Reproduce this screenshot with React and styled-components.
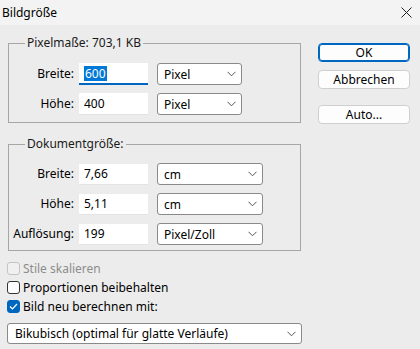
import React from "react";
import styled, { createGlobalStyle } from "styled-components";

const Global = createGlobalStyle`
  html, body { margin: 0; padding: 0; background: #ececec; }
  body { font-family: "Noto Sans", "Open Sans", sans-serif; font-size: 12px; color: #000; }
  * { box-sizing: border-box; }
`;

const Window = styled.div`
  width: 420px;
  height: 349px;
  background: #ececec;
  display: flex;
  flex-direction: column;
  overflow: hidden;
`;

const TitleBar = styled.div`
  height: 25px;
  background: #f3f3f3;
  display: flex;
  align-items: center;
  justify-content: space-between;
  padding: 0 8px 0 2px;
`;

const Title = styled.span`
  font-size: 12px;
  line-height: 16px;
`;

const Body = styled.div`
  display: flex;
  padding: 10px 0 0 7px;
`;

const LeftCol = styled.div`
  width: 296px;
  display: flex;
  flex-direction: column;
`;

const Group = styled.fieldset`
  margin: ${(p) => (p.$first ? "0" : "13px")} 0 0 1px;
  width: 293px;
  min-width: 0;
  border: 1px solid #a6a6a6;
  padding: ${(p) => p.$pt}px 0 ${(p) => p.$pb}px 0;
  display: grid;
  grid-template-columns: 65px 74px ${(p) => p.$dd + 9}px;
  row-gap: 8px;
  align-items: center;
`;

const Legend = styled.legend`
  margin-left: 16px;
  padding: 0 2px;
  line-height: 16px;
  color: #1a1a1a;
`;

const Label = styled.label`
  text-align: right;
  line-height: 22px;
`;

const Input = styled.div`
  margin-left: 5px;
  width: 69px;
  height: ${(p) => (p.$h ? p.$h : 21)}px;
  background: #fff;
  border-bottom: ${(p) => (p.$focus ? "2px solid #0067c0" : "1px solid #e3e3e3")};
  padding-left: 5px;
  display: flex;
  align-items: center;
`;

const Selected = styled.span`
  background: #0078d7;
  color: #fff;
  padding: 0 1px;
  line-height: 15px;
`;

const Select = styled.div`
  margin-left: 9px;
  width: ${(p) => p.$w}px;
  height: 22px;
  background: #fff;
  border: 1px solid #8a8a8a;
  border-radius: 3px;
  display: flex;
  align-items: center;
  justify-content: space-between;
  padding: 0 5px 0 6px;
`;

const Chevron = () => (
  <svg width="9" height="6" viewBox="0 0 9 6">
    <path d="M0.5 0.8 L4.5 4.8 L8.5 0.8" fill="none" stroke="#555" strokeWidth="1" />
  </svg>
);

const CheckRow = styled.div`
  height: 19px;
  display: flex;
  align-items: center;
  gap: 3px;
  color: ${(p) => (p.$disabled ? "#8c8c8c" : "#000")};
  margin-top: ${(p) => (p.$first ? "8px" : "0")};
`;

const Box = styled.span`
  width: 13px;
  height: 13px;
  border-radius: 3px;
  border: 1px solid ${(p) => (p.$disabled ? "#c4c4c4" : p.$checked ? "#0067c0" : "#333")};
  background: ${(p) => (p.$checked ? "#0067c0" : p.$disabled ? "#f0f0f0" : "#fdfdfd")};
  display: flex;
  align-items: center;
  justify-content: center;
`;

const WideSelect = styled(Select)`
  margin: 7px 0 0 0;
  width: 295px;
  height: 21px;
  padding-left: 7px;
`;

const RightCol = styled.div`
  margin-left: 15px;
  padding-top: 8px;
  display: flex;
  flex-direction: column;
  gap: 8px;
`;

const Button = styled.button`
  width: 92px;
  height: 19px;
  margin-top: ${(p) => (p.$gap ? "8px" : "0")};
  font: inherit;
  font-size: 12px;
  line-height: 16px;
  color: #000;
  background: #fdfdfd;
  border: 1px solid ${(p) => (p.$default ? "#0067c0" : "#cfcfcf")};
  box-shadow: ${(p) => (p.$default ? "inset 0 0 0 1px #0067c0" : "none")};
  border-radius: 4px;
  padding: 0;
`;

const Close = () => (
  <svg width="11" height="11" viewBox="0 0 11 11">
    <path d="M0.5 0.5 L10.5 10.5 M10.5 0.5 L0.5 10.5" stroke="#222" strokeWidth="1" />
  </svg>
);

export default function App() {
  return (
    <Window>
      <Global />
      <TitleBar>
        <Title>Bildgröße</Title>
        <Close />
      </TitleBar>
      <Body>
        <LeftCol>
          <Group $first $pt={12} $pb={7} $dd={85}>
            <Legend>Pixelmaße: 703,1 KB</Legend>
            <Label>Breite:</Label>
            <Input $focus $h={22}><Selected>600</Selected></Input>
            <Select $w={85}>Pixel<Chevron /></Select>
            <Label>Höhe:</Label>
            <Input $h={22}>400</Input>
            <Select $w={85}>Pixel<Chevron /></Select>
          </Group>
          <Group $pt={11} $pb={5} $dd={106}>
            <Legend>Dokumentgröße:</Legend>
            <Label>Breite:</Label>
            <Input>7,66</Input>
            <Select $w={106}>cm<Chevron /></Select>
            <Label>Höhe:</Label>
            <Input>5,11</Input>
            <Select $w={106}>cm<Chevron /></Select>
            <Label>Auflösung:</Label>
            <Input>199</Input>
            <Select $w={106}>Pixel/Zoll<Chevron /></Select>
          </Group>
          <CheckRow $disabled $first>
            <Box $disabled />
            Stile skalieren
          </CheckRow>
          <CheckRow>
            <Box />
            Proportionen beibehalten
          </CheckRow>
          <CheckRow>
            <Box $checked>
              <svg width="9" height="7" viewBox="0 0 9 7">
                <path d="M1 3.5 L3.5 6 L8 1" fill="none" stroke="#fff" strokeWidth="1.2" />
              </svg>
            </Box>
            Bild neu berechnen mit:
          </CheckRow>
          <WideSelect $w={295}>Bikubisch (optimal für glatte Verläufe)<Chevron /></WideSelect>
        </LeftCol>
        <RightCol>
          <Button $default>OK</Button>
          <Button>Abbrechen</Button>
          <Button $gap>Auto...</Button>
        </RightCol>
      </Body>
    </Window>
  );
}
